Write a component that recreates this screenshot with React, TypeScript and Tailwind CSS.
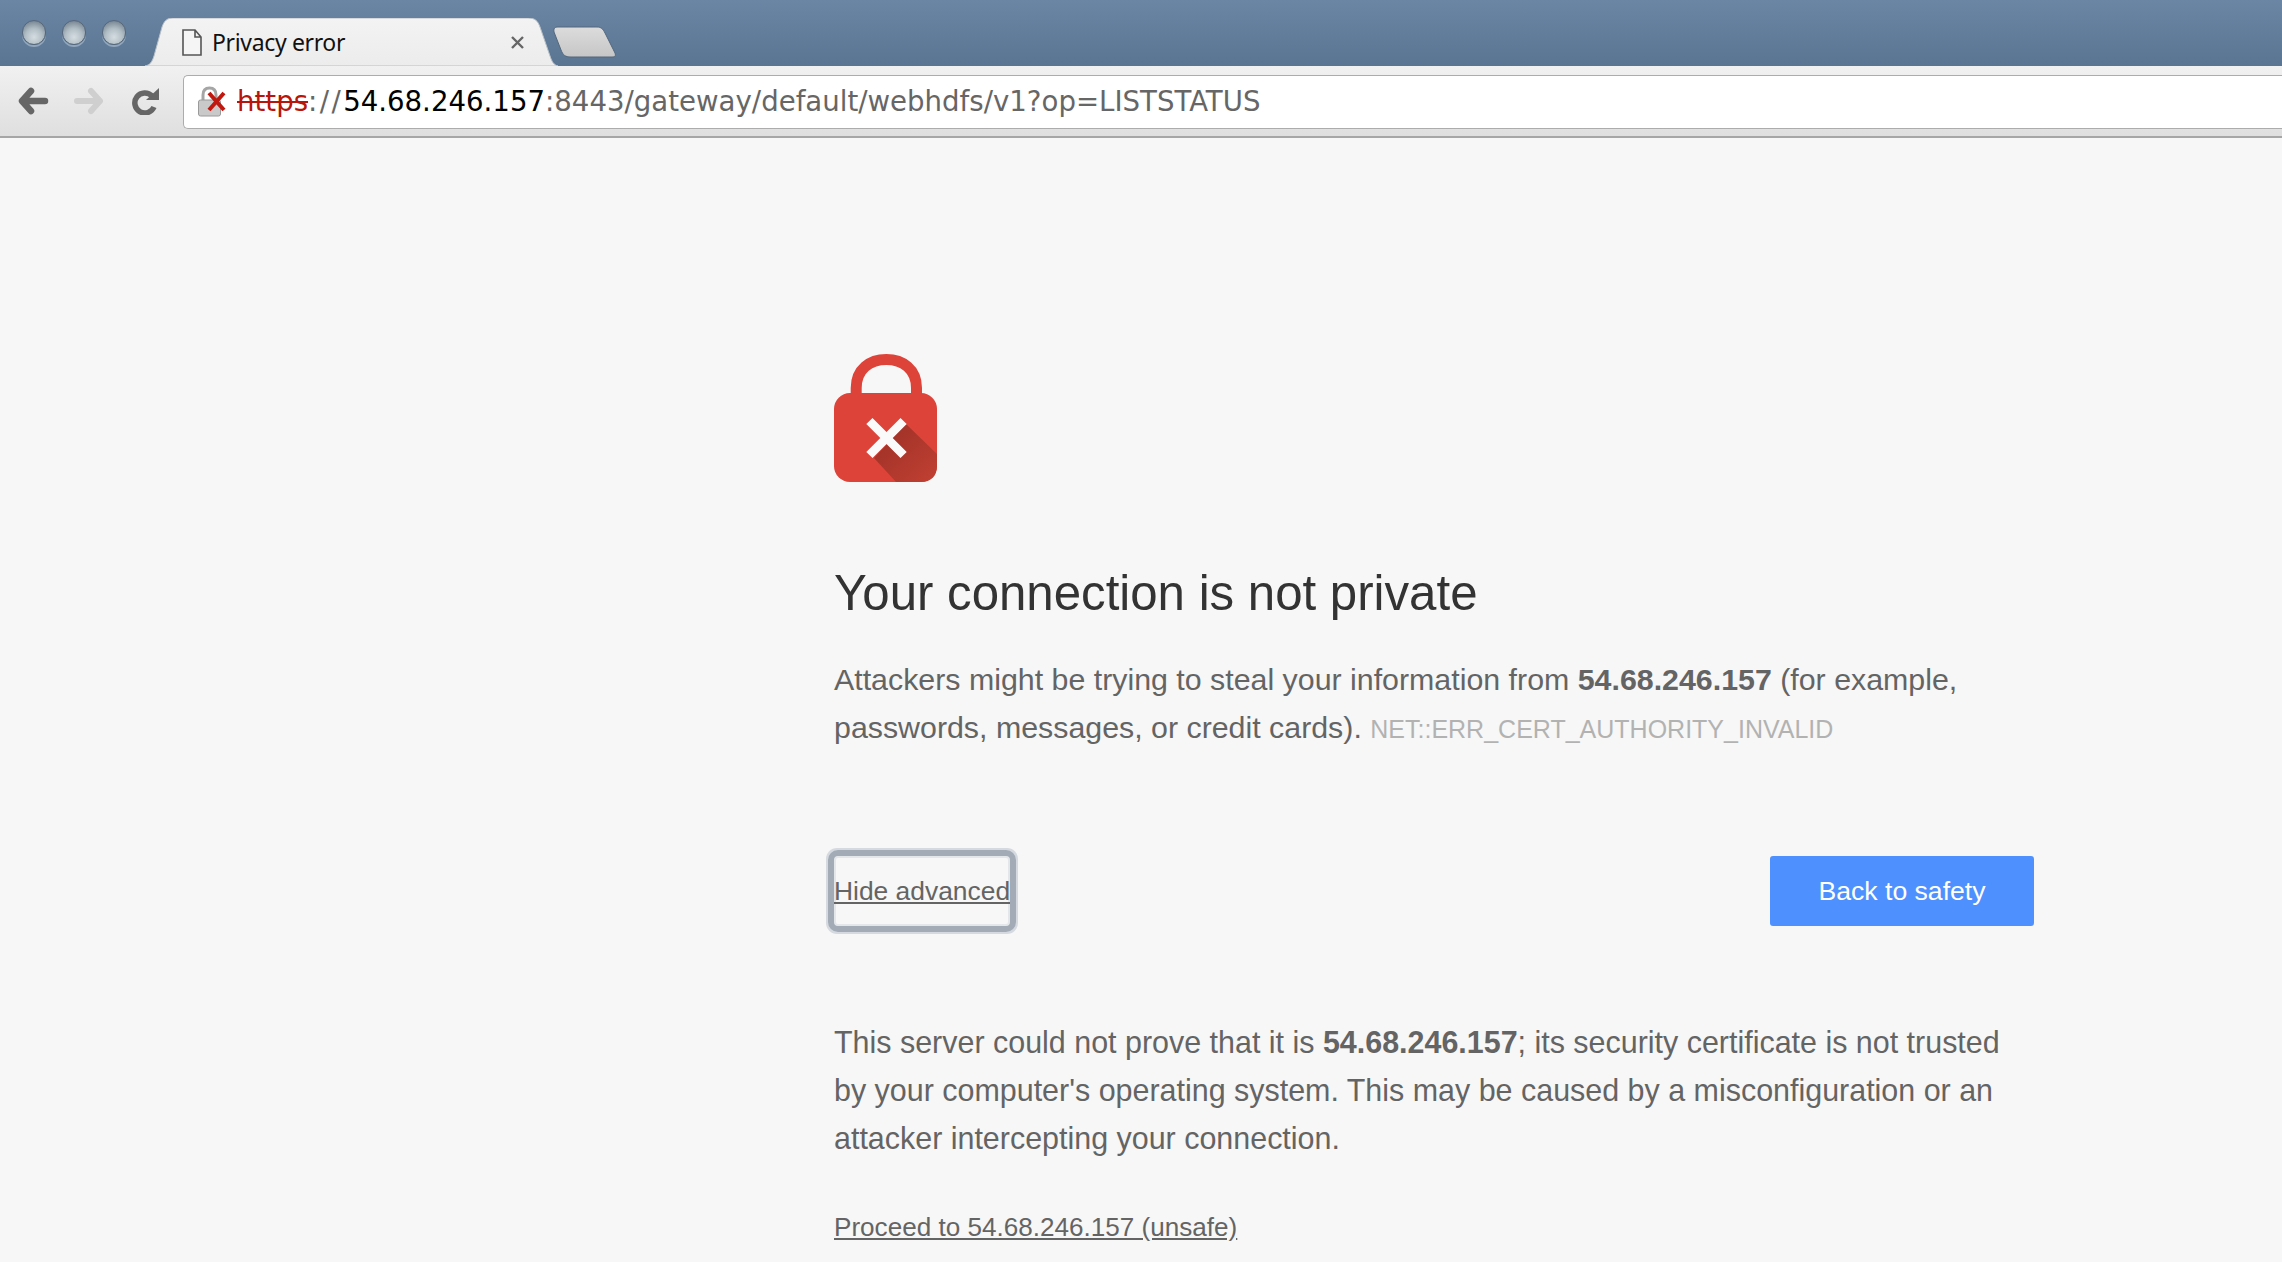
import React from "react";

const Light = () => (
  <div className="w-[24px] h-[25px] rounded-full border border-[#56677a] bg-[radial-gradient(circle_at_50%_70%,#d5dde1_0%,#b0bcc4_45%,#7f8e9a_78%,#506172_100%)] shadow-[0_2px_0_rgba(210,222,232,0.45)]" />
);

const Lock = () => (
  <svg width="103" height="128" viewBox="0 0 103 128" className="block">
    <defs>
      <linearGradient id="sh" x1="0" y1="0" x2="1" y2="1">
        <stop offset="0" stopColor="#9a2f25" />
        <stop offset="1" stopColor="#c24033" />
      </linearGradient>
    </defs>
    <path d="M22.2 42 V34 C22.2 15 36 5.5 52.3 5.5 C68.6 5.5 82.5 15 82.5 34 V42" fill="none" stroke="#dd4339" strokeWidth="11" />
    <rect x="0" y="39" width="103" height="89" rx="16" fill="#dd4339" />
    <path d="M72 70 L103 100 V112 C103 122 97 128 87 128 H62 L40 104 Z" fill="url(#sh)" />
    <path d="M38.5 64 L52.5 78 L66.5 64 L72.7 70 L58.7 84 L72.7 98 L66.5 104 L52.5 90 L38.5 104 L32.3 98 L46.3 84 L32.3 70 Z" fill="#fafafa" />
  </svg>
);

export default function App() {
  return (
    <div className="w-[2282px] h-[1262px] overflow-hidden flex flex-col bg-[#f7f7f7] font-['Liberation_Sans',Arial,sans-serif]">
      <div className="h-[66px] shrink-0 flex items-start pl-[22px] bg-[linear-gradient(180deg,#6a86a4_0%,#5a7592_100%)]">
        <div className="flex gap-[16px] mt-[20px]">
          <Light />
          <Light />
          <Light />
        </div>
        <div className="relative ml-[19px] mt-[18px] w-[413px] h-[48px] flex items-center pl-[37px] pr-[34px]">
          <svg className="absolute inset-0" width="413" height="48" viewBox="0 0 413 48">
            <defs>
              <linearGradient id="tab" x1="0" y1="0" x2="0" y2="1">
                <stop offset="0" stopColor="#f3f3f3" />
                <stop offset="1" stopColor="#ececec" />
              </linearGradient>
            </defs>
            <path d="M0 48 C5 47 7 44 9 38 L17 9 C19 3 22 0 28 0 H383 C390 0 393 3 395 9 L405 38 C407 44 409 47 413 48 Z" fill="url(#tab)" stroke="#b9c0c6" strokeWidth="1" />
          </svg>
          <svg className="relative shrink-0" width="20" height="27" viewBox="0 0 20 27">
            <path d="M1 1 H13 L19 8 V26 H1 Z M13 1 V8 H19" fill="#f5f5f5" stroke="#555" strokeWidth="1.6" />
          </svg>
          <span className="relative ml-[10px] text-[23px] leading-none tracking-[-0.35px] text-[#111] font-['Noto_Sans',sans-serif]">Privacy error</span>
          <svg className="relative ml-auto" width="13" height="13" viewBox="0 0 13 13">
            <path d="M1 1 L12 12 M12 1 L1 12" stroke="#666" strokeWidth="2.4" />
          </svg>
        </div>
        <svg className="mt-[26px] -ml-[5px]" width="64" height="32" viewBox="0 0 64 32">
          <defs>
            <linearGradient id="nt" x1="0" y1="0" x2="0" y2="1">
              <stop offset="0" stopColor="#dcdcdc" />
              <stop offset="1" stopColor="#c6c6c6" />
            </linearGradient>
          </defs>
          <path d="M1 6 C0.5 2 2 1 5 1 H44 C48 1 50 3 52 7 L62 27 C63 30 62 31 59 31 H18 C12 31 10 29 8 24 Z" fill="url(#nt)" stroke="#53677c" strokeWidth="1" />
        </svg>
      </div>

      <div className="h-[72px] shrink-0 flex items-center pl-[18px] bg-[linear-gradient(180deg,#f1f1f1_0%,#dfdfdf_100%)] border-b-2 border-[#a6a6a6]">
        <svg width="31" height="28" viewBox="0 0 31 28">
          <path d="M13 4 L4 14 L13 24 M5 14 H27" fill="none" stroke="#666" strokeWidth="6.5" strokeLinejoin="round" strokeLinecap="round" />
        </svg>
        <svg className="ml-[24px]" width="31" height="28" viewBox="0 0 31 28">
          <path d="M18 4 L27 14 L18 24 M26 14 H4" fill="none" stroke="#cfcfcf" strokeWidth="6" strokeLinejoin="round" strokeLinecap="round" />
        </svg>
        <svg className="ml-[28px]" width="27" height="28" viewBox="0 0 27 28">
          <path d="M20 9 A10 10 0 1 0 22 20" fill="none" stroke="#666" strokeWidth="5.5" />
          <path d="M14 13 H27 V1 Z" fill="#666" />
        </svg>
        <div className="ml-[24px] mb-[-1px] flex-1 h-[54px] bg-white rounded-l-[5px] border border-r-0 border-[#acacac] flex items-center pl-[14px]">
          <svg className="shrink-0" width="28" height="31" viewBox="0 0 28 31">
            <path d="M5 15 V9 C5 4 8 2 11.5 2 C15 2 18 4 18 9 V15" fill="none" stroke="#a5a5a5" strokeWidth="3" />
            <rect x="0.5" y="14" width="22" height="16" rx="2" fill="#c9c9c9" stroke="#9a9a9a" />
            <path d="M11 7 L26 24 M26 7 L11 24" stroke="#c0170f" strokeWidth="4" />
          </svg>
          <div className="ml-[11px] text-[27.6px] leading-none whitespace-nowrap font-['DejaVu_Sans',sans-serif] text-[#666]">
            <span className="text-[#b8150c] line-through">https</span>
            <span className="tracking-[2.4px]">://</span>
            <span className="text-black">54.68.246.157</span>
            <span>:8443/gateway/default/webhdfs/v1?op=LISTSTATUS</span>
          </div>
        </div>
      </div>

      <div className="pt-[216px] pl-[834px] text-[30.35px] leading-[48px] text-[#646464] w-[2034px]">
        <Lock />
        <h1 className="mt-[82px] text-[49.2px] leading-[58px] font-normal text-[#333]">Your connection is not private</h1>
        <p className="mt-[34px]">
          Attackers might be trying to steal your information from <b>54.68.246.157</b> (for example,
          <br />
          passwords, messages, or credit cards). <span className="text-[25px] text-[#b2b2b2]">NET::ERR_CERT_AUTHORITY_INVALID</span>
        </p>
        <div className="mt-[103px] flex items-center justify-between">
          <button className="underline text-[26.4px] text-[#646464] leading-[70px] h-[70px] rounded-[4px] outline-[6px] outline-[#a3acb6] shadow-[0_0_0_8px_#d5dae0,inset_0_0_0_2px_#e4e7ea]">Hide advanced</button>
          <button className="w-[264px] h-[70px] rounded-[3px] bg-[#4d90fe] text-white text-[26.6px]">Back to safety</button>
        </div>
        <p className="mt-[92px] text-[30.45px]">
          This server could not prove that it is <b>54.68.246.157</b>; its security certificate is not trusted
          <br />
          by your computer's operating system. This may be caused by a misconfiguration or an
          <br />
          attacker intercepting your connection.
        </p>
        <p className="mt-[41px] text-[26.1px] underline">Proceed to 54.68.246.157 (unsafe)</p>
      </div>
    </div>
  );
}
